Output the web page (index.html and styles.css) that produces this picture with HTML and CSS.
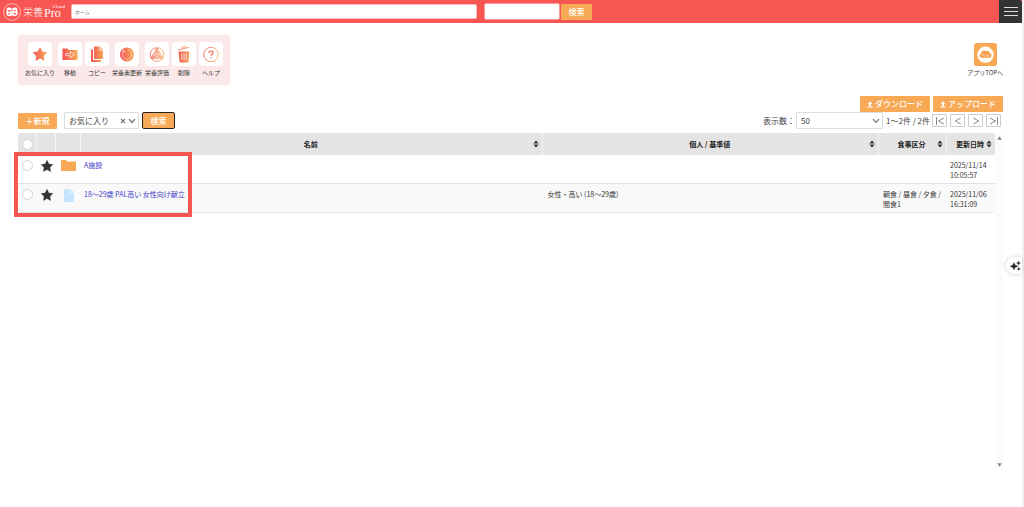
FILE: index.html
```html
<!DOCTYPE html>
<html lang="ja">
<head>
<meta charset="utf-8">
<title>栄養Pro Cloud</title>
<link rel="stylesheet" href="styles.css">
</head>
<body>
<svg class="defs" aria-hidden="true">
  <defs>
    <linearGradient id="warm" gradientUnits="userSpaceOnUse" x1="4" y1="0" x2="20" y2="0"><stop offset="0.1" stop-color="#f65552"/><stop offset="1" stop-color="#f6b15b"/></linearGradient>
    <symbol id="sort" viewBox="0 0 6 8"><path d="M3 0.6 5.600 3.500H0.400zM3 7.400 0.400 4.500h5.200z" fill="#263238"/></symbol>
    <symbol id="star" viewBox="0 0 12 12"><path d="M6 .3 7.800 4l4 .5-2.900 2.900.7 4.100L6 9.600l-3.600 1.900.7-4.100L.2 4.500l4-.5z" fill="#333" stroke="#333" stroke-width=".4" stroke-linejoin="round"/></symbol>
    <symbol id="load" viewBox="0 0 6 7"><path d="M3 .3 5.400 3H4V4.800H2V3H.6zM.4 5.200h5.200v1.300H.4z" fill="#fff"/></symbol>
  </defs>
</svg>
<header class="header">
  <a class="logo" href="#" aria-label="栄養Pro Cloud">
    <svg class="logo-mark" viewBox="0 0 18 18"><circle cx="9" cy="9" r="8.400" fill="none" stroke="#fff" stroke-opacity=".7" stroke-width=".8"/><path d="M5 4.500q2-.5 4 1 2-1.500 4-1 1.700.8 1.200 2.700 1.300 2.300.3 4.300-1.500 2.300-3.700 1.700L9 12.300l-1.800.9Q4.500 13.800 3.500 11.500q-1-2 .3-4.300Q3.300 5.300 5 4.500z" fill="#fff"/><path d="M4.700 7.700h3M6.200 7.700v1.700M8.900 5.800v3M10.700 7.600h2.300M5 10.700q1.200 1 2.300 0M10.600 10.700q1.200-1.300 2.300 0-1.200 1.200-2.300 0" fill="none" stroke="#f75653" stroke-width=".9"/></svg>
    <span class="logo-kanji">栄養</span><span class="logo-pro">Pro</span><span class="logo-cloud">Cloud</span>
  </a>
  <input class="crumb" type="text" value="ホーム" aria-label="現在の場所">
  <input class="search-box" type="text" aria-label="検索語">
  <button class="btn btn-head" type="button">検索</button>
  <button class="menu" type="button" aria-label="メニュー"><span></span><span></span><span></span></button>
</header>
<main class="main">
  <section class="top">
    <nav class="tools">
      <button class="tool" type="button"><svg viewBox="0 0 24 24"><path d="m12 5 2.300 4.600 5 .7-3.600 3.600.8 5.100L12 16.600 7.500 19l.8-5.100-3.600-3.600 5-.7z" fill="url(#warm)"/></svg><span>お気に入り</span></button>
      <button class="tool" type="button"><svg viewBox="0 0 24 24"><path d="M4.500 6.500h5l1 1.500H19.500v10H4.500z" fill="url(#warm)"/><path d="M7.500 11.700h5V9.600l4 3.100-4 3.100v-2.100h-5z" fill="none" stroke="#fff" stroke-opacity=".85" stroke-width=".8"/></svg><span>移動</span></button>
      <button class="tool" type="button"><svg viewBox="0 0 24 24"><path d="M6 7.500h2v10.500h8v2H6zM9 4.500h5.500v4H18V17H9zM15.300 4.500 18 7.500h-2.700z" fill="url(#warm)"/></svg><span>コピー</span></button>
      <button class="tool" type="button"><svg viewBox="0 0 24 24"><circle cx="12" cy="12.500" r="7" fill="url(#warm)"/><path d="M9 8.900a4.700 4.700 0 1 0 6.400.4M9.300 11V8.600H7M13 7.800a5 5 0 0 1 2.500 1.600" fill="none" stroke="#fff" stroke-opacity=".65" stroke-width=".8"/></svg><span>栄養素更新</span></button>
      <button class="tool" type="button"><svg viewBox="0 0 24 24"><g fill="none" stroke="url(#warm)" stroke-width=".8"><circle cx="12" cy="12.500" r="6.800"/><path d="M12 6 17.900 16.200H6.100zM12 9l3.500 6H8zM12 6v7l-5.900 3.200M12 13l5.900 3.200"/></g></svg><span>栄養評価</span></button>
      <button class="tool" type="button"><svg viewBox="0 0 24 24"><path d="M6.500 9.500h11L16.300 20.500H7.700z" fill="url(#warm)"/><path d="M9.700 11.500v6.500M12 11.500v6.500M14.300 11.500v6.500" stroke="#fff" stroke-width=".8"/><path d="m6 8.100 11.600-3M10.500 6.600l-.3-1.300 3-.8.4 1.300" fill="none" stroke="url(#warm)" stroke-width=".8"/></svg><span>削除</span></button>
      <button class="tool" type="button"><svg viewBox="0 0 24 24"><circle cx="12" cy="12.500" r="7.200" fill="none" stroke="url(#warm)" stroke-width=".8"/><path d="M10 10.900c.1-2.600 4.200-2.500 4.100-.1 0 1.500-2 1.500-2 3M12.100 14.900v1.300" fill="none" stroke="#f2604f" stroke-width="1.200"/></svg><span>ヘルプ</span></button>
    </nav>
    <a class="app-top" href="#">
      <svg viewBox="0 0 24 24"><rect width="24" height="24" rx="3" fill="#f7a955"/><circle cx="12" cy="12.200" r="8.500" fill="#fff"/><path d="M8.300 15.500a2.500 2.500 0 0 1-.8-4.900 3 3 0 0 1 5-2 2.800 2.800 0 0 1 4 2.200 2.400 2.400 0 0 1-.2 4.700z" fill="#f5a04d"/><path d="M8.500 14v-2.200h1.300v1H8.600M11.300 14v-1.600l1-.2M13.800 12.500h1.400V14h-1.400z" fill="none" stroke="#fff" stroke-opacity=".8" stroke-width=".5"/></svg>
      <span>アプリTOPへ</span>
    </a>
  </section>
  <div class="transfer">
    <button class="btn btn-load" type="button"><svg><use href="#load"/></svg>ダウンロード</button>
    <button class="btn btn-load" type="button"><svg><use href="#load"/></svg>アップロード</button>
  </div>
  <div class="filters">
    <button class="btn btn-new" type="button">＋新規</button>
    <div class="pick">
      <select class="select select-fav" aria-label="絞り込み"><option>お気に入り</option></select>
      <button class="clear" type="button" aria-label="クリア"><svg viewBox="0 0 6 6"><path d="m1 1 4 4M5 1 1 5" stroke="#777" stroke-width="1.100"/></svg></button>
      <svg class="chevron" viewBox="0 0 8 6"><path d="m1 1 3 3.500L7 1" fill="none" stroke="#888" stroke-width="1.500"/></svg>
    </div>
    <button class="btn btn-find" type="button">検索</button>
    <label class="count-label" for="count">表示数：</label>
    <div class="pick">
      <select class="select select-count" id="count"><option>50</option></select>
      <svg class="chevron" viewBox="0 0 8 6"><path d="m1 1 3 3.500L7 1" fill="none" stroke="#888" stroke-width="1.300"/></svg>
    </div>
    <span class="range">1〜2件 / 2件</span>
    <nav class="pager">
      <button type="button" aria-label="最初"><svg viewBox="0 0 12 10"><path d="M2.500 1v8M10 2 4.500 5 10 8"/></svg></button>
      <button type="button" aria-label="前"><svg viewBox="0 0 12 10"><path d="M8.700 2 3.300 5l5.400 3"/></svg></button>
      <button type="button" aria-label="次"><svg viewBox="0 0 12 10"><path d="M3.300 2l5.400 3-5.400 3"/></svg></button>
      <button type="button" aria-label="最後"><svg viewBox="0 0 12 10"><path d="M9.500 1v8M2 2l5.500 3L2 8"/></svg></button>
    </nav>
  </div>
  <section class="list">
    <div class="table-wrap">
      <table class="table">
        <colgroup><col class="c-check"><col class="c-star"><col class="c-kind"><col class="c-name"><col class="c-base"><col class="c-meal"><col class="c-date"></colgroup>
        <thead>
          <tr>
            <th><input type="checkbox" aria-label="すべて選択"></th><th></th><th></th>
            <th><div class="head"><span>名前</span><button type="button" aria-label="名前で並べ替え"><svg><use href="#sort"/></svg></button></div></th>
            <th><div class="head"><span>個人 / 基準値</span><button type="button" aria-label="基準値で並べ替え"><svg><use href="#sort"/></svg></button></div></th>
            <th><div class="head"><span>食事区分</span><button type="button" aria-label="食事区分で並べ替え"><svg><use href="#sort"/></svg></button></div></th>
            <th><div class="head"><span>更新日時</span><button type="button" aria-label="更新日時で並べ替え"><svg><use href="#sort"/></svg></button></div></th>
          </tr>
        </thead>
        <tbody>
          <tr>
            <td class="mark"><input type="checkbox" aria-label="A施設を選択"></td>
            <td class="mark"><svg class="star"><use href="#star"/></svg></td>
            <td class="mark"><svg class="folder" viewBox="0 0 15 11"><path d="M0 .8Q0 0 .8 0H5l1.200 1.500h8Q15 1.500 15 2.300v7.900q0 .8-.8.8H.8Q0 11 0 10.200z" fill="#f7a955"/></svg></td>
            <td><a href="#">A施設</a></td><td></td><td></td><td>2025/11/14<br>10:05:57</td>
          </tr>
          <tr>
            <td class="mark"><input type="checkbox" aria-label="献立を選択"></td>
            <td class="mark"><svg class="star"><use href="#star"/></svg></td>
            <td class="mark"><svg class="file" viewBox="0 0 10 13"><path d="M0 .8Q0 0 .8 0H6v4h4v8.200q0 .8-.8.8H.8Q0 13 0 12.200zM6.700 0 10 3.300H6.700z" fill="#c5e7fd"/></svg></td>
            <td><a href="#">18〜29歳 PAL高い 女性向け献立</a></td><td>女性・高い (18〜29歳)</td><td>朝食 / 昼食 / 夕食 / 間食1</td><td>2025/11/06<br>16:31:09</td>
          </tr>
        </tbody>
      </table>
      <div class="highlight"></div>
    </div>
    <div class="track"><svg viewBox="0 0 6 4"><path d="M3 0 5.800 4H.2z" fill="#888"/></svg><svg viewBox="0 0 6 4"><path d="M3 4 .2 0h5.600z" fill="#888"/></svg></div>
  </section>
</main>
<button class="assist" type="button" aria-label="アシスタント"><svg viewBox="0 0 11 10"><path d="M4 1.500 5.100 4 8 5.200 5.100 6.400 4 9 2.900 6.400 0 5.200 2.900 4zM8.500 0 9 1.500l1.500.6L9 2.700l-.5 1.500L8 2.700l-1.500-.6L8 1.500zM8.800 6.200l.4 1.200 1.200.5-1.200.5-.4 1.200-.4-1.200-1.200-.5 1.200-.5z" fill="#222" stroke="#222" stroke-width=".3"/></svg></button>
</body>
</html>
```
FILE: styles.css
```css
* { box-sizing: border-box; }
body {
  margin: 0;
  min-height: 100vh;
  border-right: 2px solid #f1f1f1;
  background: #fff;
  color: #333;
  font: 7px/10px "Noto Sans CJK JP", sans-serif;
}
button, input, select { margin: 0; padding: 0; border: 0; font: inherit; color: inherit; }
button { background: none; cursor: pointer; }
svg { display: block; }
a { text-decoration: none; color: #3f40c8; }
.defs { position: absolute; width: 0; height: 0; }

.header { display: flex; align-items: center; height: 23px; padding-left: 3px; background: #f75653; }
.logo { display: flex; align-items: center; flex: none; width: 68px; height: 18px; color: #fff; white-space: nowrap; }
.logo-mark { flex: none; width: 18px; height: 18px; margin-right: 2px; }
.logo-kanji { font-size: 10px; font-weight: 300; }
.logo-pro { margin: 2px 0 0 1px; font: 12px/10px "Liberation Serif", serif; }
.logo-cloud { align-self: flex-start; margin: 1px 0 0 -8px; font: 5px/5px "Liberation Serif", serif; }
.crumb { flex: 0 1 406px; height: 15px; margin-right: 7px; padding: 0 3px; border: 1px solid #fbb; border-radius: 2px; background: #fff; color: #777; font-size: 5px; }
.search-box { width: 76px; height: 17px; border: 1px solid #f99; border-radius: 2px; background: #fff; }
.btn { flex: none; border-radius: 1px; background: #f7a955; color: #fff; font-size: 8px; line-height: 12px; font-weight: 500; }
.btn-head { width: 31px; height: 16px; margin-left: 1px; }
.menu { display: flex; flex-direction: column; align-items: center; justify-content: center; gap: 3px; width: 23px; height: 23px; margin-left: auto; border-radius: 0 3px 0 0; background: #333; }
.menu span { width: 14px; height: 1px; background: #ddd; }

.main { padding: 12px 19px 0 18px; }
.top { display: flex; justify-content: space-between; align-items: flex-start; }
.tools { display: flex; gap: 3px; padding: 7px; border-radius: 3px; background: #fbe8e8; }
.tool { display: flex; flex-direction: column; align-items: center; gap: 2px; min-width: 24px; font-size: 6px; white-space: nowrap; }
.tool svg { width: 24px; height: 24px; border-radius: 4px; background: #fff; }
.app-top { display: flex; flex-direction: column; align-items: center; gap: 2px; padding-top: 8px; color: #333; font-size: 6px; }
.app-top svg { width: 23px; height: 23px; }

.transfer { display: flex; justify-content: flex-end; gap: 3px; margin-top: 11px; }
.btn-load { display: flex; align-items: center; justify-content: center; gap: 2px; width: 70px; height: 16px; }
.btn-load svg { width: 6px; height: 7px; }
.filters { display: flex; align-items: center; height: 17px; padding-right: 2px; color: #444; font-size: 8px; line-height: 12px; white-space: nowrap; }
.btn-new { width: 39px; height: 16px; margin-right: 7px; }
.pick { position: relative; }
.select { appearance: none; height: 17px; padding: 0 4px; border: 1px solid #ddd; border-radius: 1px; background: #fff; }
.select-fav { width: 75px; }
.select-count { width: 87px; }
.chevron { position: absolute; right: 3px; top: 6px; width: 8px; height: 6px; pointer-events: none; }
.clear { position: absolute; right: 13px; top: 6px; }
.clear svg { width: 6px; height: 6px; }
.btn-find { width: 33px; height: 17px; margin-left: 3px; border: 1px solid #222; border-radius: 2px; }
.count-label { margin: 0 1px 0 auto; }
.range { width: 46px; margin: 0 0 0 3px; }
.pager { display: flex; gap: 3px; }
.pager button { width: 15px; height: 13px; border: 1px solid #ccc; border-radius: 1px; }
.pager svg { width: 12px; height: 10px; margin: auto; fill: none; stroke: #888; stroke-width: 1; }

.list { display: flex; min-height: 337px; margin-top: 4px; }
.table-wrap { position: relative; flex: 1; }
.table { width: 100%; table-layout: fixed; border-collapse: separate; border-spacing: 0; border-radius: 3px; overflow: hidden; }
.c-check, .c-star { width: 19px; }
.c-kind { width: 25px; }
.c-name { width: 51%; }
.c-base { width: 37%; }
.c-meal { width: 68px; }
.c-date { width: 48px; }
.table th { height: 22px; padding: 0 3px 0 7px; border-right: 1px solid #f4f4f4; background: #e4e4e4; color: #222; font-weight: 700; }
.table th:first-child { padding: 0; }
.table th:last-child { border-right: 0; }
.head { display: flex; align-items: center; }
.head span { flex: 1; text-align: center; white-space: nowrap; }
.head svg { width: 6px; height: 8px; }
.table td { height: 29px; padding: 5px 3px 3px 4px; border-bottom: 1px solid #e2e2e2; vertical-align: top; }
.table td:nth-child(4), .table td:last-child { padding-left: 3px; }
.table tbody tr:nth-child(2) td { background: #f9f9f9; }
.table .mark { padding: 5px 0 3px; }
.mark svg { margin: 0 auto; }
.star { width: 12px; height: 12px; }
.folder { width: 15px; height: 11px; }
.file { width: 10px; height: 13px; }
.table input { display: block; appearance: none; width: 11px; height: 11px; margin: 0 auto; border: 1px solid #d2d2d2; border-radius: 50%; background: #fff; }
.highlight { position: absolute; left: -4px; top: 19px; width: 178px; height: 65px; border: 4px solid #f65552; pointer-events: none; }
.track { display: flex; flex-direction: column; justify-content: space-between; align-items: center; width: 8px; padding: 3px 0; background: #fbfbfb; }
.track svg { width: 5px; height: 4px; }

.assist { position: fixed; right: 2px; top: 257px; display: flex; align-items: center; width: 16px; height: 17px; padding-left: 4px; border-radius: 9px 0 0 9px; background: #fff; box-shadow: 0 0 4px #ccc; }
.assist svg { width: 11px; height: 10px; }
```
